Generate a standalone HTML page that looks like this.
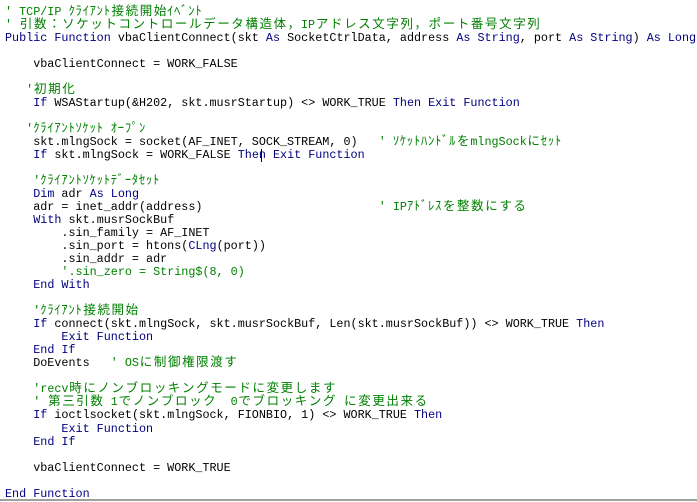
<!DOCTYPE html>
<html><head><meta charset="utf-8">
<style>
html,body{margin:0;padding:0;background:#fff;width:697px;height:502px;overflow:hidden;position:relative}
#p{position:absolute;left:5px;top:6px;font-family:"Liberation Mono",monospace;font-size:11.75px;color:#000;white-space:normal}
.l{height:13.03px;line-height:13px;overflow:visible;white-space:pre}
.c{color:#008000}.k{color:#000080}
.f{display:inline-block;width:14.1px;text-align:center;font-family:"Noto Sans CJK JP",sans-serif;font-size:12.5px;line-height:8px;height:8px;vertical-align:baseline}
.h{display:inline-block;width:7.05px;font-family:"Noto Sans CJK JP",sans-serif;font-size:12.5px;line-height:8px;height:8px;vertical-align:baseline}
#bar{position:absolute;left:0;top:499px;width:697px;height:2px;background:#a0a0a0}
#cur{position:absolute;left:261px;top:149px;width:1px;height:13px;background:#000}
</style></head><body>
<div id="p"><div class="l"><span class="c">' TCP/IP ｸﾗｲｱﾝﾄ接続開始ｲﾍﾞﾝﾄ</span></div><div class="l"><span class="c">' 引数：ソケットコントロールデータ構造体，IPアドレス文字列，ポート番号文字列</span></div><div class="l"><span class="k">Public Function</span> vbaClientConnect(skt <span class="k">As</span> SocketCtrlData, address <span class="k">As String</span>, port <span class="k">As String</span>) <span class="k">As Long</span></div><div class="l"> </div><div class="l">    vbaClientConnect = WORK_FALSE</div><div class="l"> </div><div class="l">   <span class="c">'初期化</span></div><div class="l">    <span class="k">If</span> WSAStartup(&amp;H202, skt.musrStartup) &lt;&gt; WORK_TRUE <span class="k">Then Exit Function</span></div><div class="l"> </div><div class="l">   <span class="c">'ｸﾗｲｱﾝﾄｿｹｯﾄ ｵｰﾌﾟﾝ</span></div><div class="l">    skt.mlngSock = socket(AF_INET, SOCK_STREAM, 0)   <span class="c">' ｿｹｯﾄﾊﾝﾄﾞﾙをmlngSockにｾｯﾄ</span></div><div class="l">    <span class="k">If</span> skt.mlngSock = WORK_FALSE <span class="k">Then Exit Function</span></div><div class="l"> </div><div class="l">    <span class="c">'ｸﾗｲｱﾝﾄｿｹｯﾄﾃﾞｰﾀｾｯﾄ</span></div><div class="l">    <span class="k">Dim</span> adr <span class="k">As Long</span></div><div class="l">    adr = inet_addr(address)                         <span class="c">' IPｱﾄﾞﾚｽを整数にする</span></div><div class="l">    <span class="k">With</span> skt.musrSockBuf</div><div class="l">        .sin_family = AF_INET</div><div class="l">        .sin_port = htons(<span class="k">CLng</span>(port))</div><div class="l">        .sin_addr = adr</div><div class="l">        <span class="c">'.sin_zero = String$(8, 0)</span></div><div class="l">    <span class="k">End With</span></div><div class="l"> </div><div class="l">    <span class="c">'ｸﾗｲｱﾝﾄ接続開始</span></div><div class="l">    <span class="k">If</span> connect(skt.mlngSock, skt.musrSockBuf, Len(skt.musrSockBuf)) &lt;&gt; WORK_TRUE <span class="k">Then</span></div><div class="l">        <span class="k">Exit Function</span></div><div class="l">    <span class="k">End If</span></div><div class="l">    DoEvents   <span class="c">' OSに制御権限渡す</span></div><div class="l"> </div><div class="l">    <span class="c">'recv時にノンブロッキングモードに変更します</span></div><div class="l">    <span class="c">' 第三引数 1でノンブロック  0でブロッキング に変更出来る</span></div><div class="l">    <span class="k">If</span> ioctlsocket(skt.mlngSock, FIONBIO, 1) &lt;&gt; WORK_TRUE <span class="k">Then</span></div><div class="l">        <span class="k">Exit Function</span></div><div class="l">    <span class="k">End If</span></div><div class="l"> </div><div class="l">    vbaClientConnect = WORK_TRUE</div><div class="l"> </div><div class="l"><span class="k">End Function</span></div></div>
<div id="cur"></div>
<div id="bar"></div>
<script>
(function(){
 var p=document.getElementById('p');
 var w=document.createTreeWalker(p,NodeFilter.SHOW_TEXT,null,false),nodes=[],n;
 while(n=w.nextNode())nodes.push(n);
 nodes.forEach(function(t){
  var s=t.nodeValue;if(!/[^\x00-\x7f]/.test(s))return;
  var frag=document.createDocumentFragment(),buf='';
  for(var i=0;i<s.length;i++){var ch=s[i],c=ch.charCodeAt(0);
   if(c<128){buf+=ch;continue;}
   if(buf){frag.appendChild(document.createTextNode(buf));buf='';}
   var sp=document.createElement('span');
   sp.className=(c>=0xFF61&&c<=0xFF9F)?'h':'f';sp.textContent=ch;frag.appendChild(sp);}
  if(buf)frag.appendChild(document.createTextNode(buf));
  t.parentNode.replaceChild(frag,t);
 });
})();
</script>
</body></html>
